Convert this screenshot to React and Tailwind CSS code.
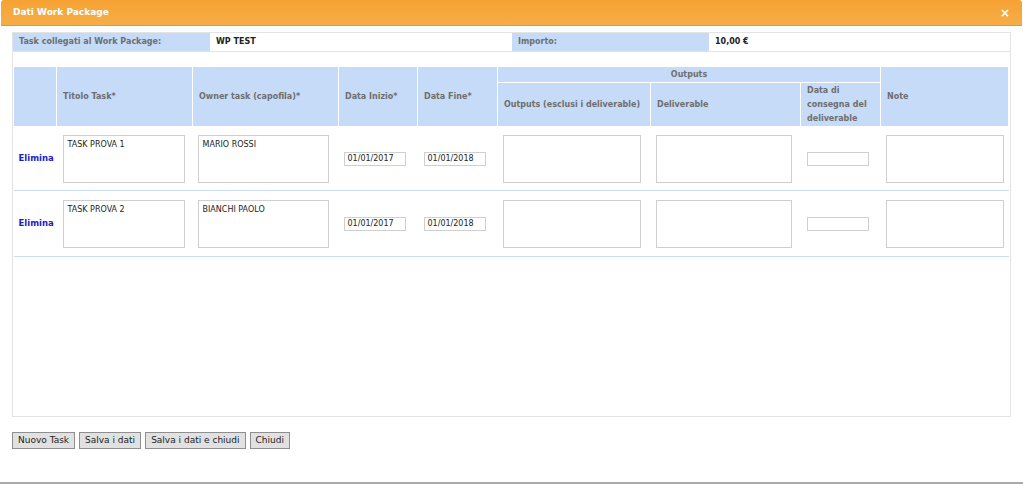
import React from "react";

const rows = [
  { titolo: "TASK PROVA 1", owner: "MARIO ROSSI", inizio: "01/01/2017", fine: "01/01/2018", h: "h-[64px]" },
  { titolo: "TASK PROVA 2", owner: "BIANCHI PAOLO", inizio: "01/01/2017", fine: "01/01/2018", h: "h-[66px]" },
];

function Area({ w, children }) {
  return (
    <div className={`${w} h-[48px] border border-[#cfcfcf] bg-white px-[4px] py-[4px] text-[8px] text-[#222] leading-[10px]`}>
      {children}
    </div>
  );
}

function Field({ w, value }) {
  return (
    <div className={`${w} h-[14px] border border-[#cfcfcf] bg-white px-[3px] text-[8px] leading-[12px] text-[#222]`}>
      {value}
    </div>
  );
}

export default function App() {
  const th = "bg-[#c6dbf8] border border-white align-middle px-[6px] text-[8px] font-bold text-[#6e6e6e]";
  return (
    <div className="w-[1023px] h-[484px] bg-white relative font-['DejaVu_Sans',sans-serif] border-b-2 border-[#a9a9a9]">
      {/* Title bar */}
      <div className="mx-[1px] h-[26px] rounded-t-[3px] bg-gradient-to-b from-[#f6a232] to-[#f5ae48] border-b border-[#e7962a] flex items-center justify-between px-[12px]">
        <span className="text-white text-[9px] font-bold">Dati Work Package</span>
        <span className="text-white text-[12px] font-bold leading-none">×</span>
      </div>

      <div className="px-[12px] pt-[6px]">
        {/* Outer box */}
        <div className="h-[385px] border border-[#e3e3e3]">
          <div className="flex h-[19px] border-b border-[#e3e3e3] text-[8px] font-bold items-stretch">
            <div className="w-[197px] bg-[#c6dbf8] text-[#6e6e6e] flex items-center pl-[6px]">Task collegati al Work Package:</div>
            <div className="w-[302px] flex items-center pl-[6px] text-[#222]">WP TEST</div>
            <div className="w-[197px] bg-[#c6dbf8] text-[#6e6e6e] flex items-center pl-[6px]">Importo:</div>
            <div className="flex-1 flex items-center pl-[6px] text-[#222]">10,00 €</div>
          </div>

          <table className="mt-[14px] w-[996px] border-collapse">
            <thead>
              <tr className="h-[16px]">
                <th rowSpan={2} className={`${th} text-left w-[43px]`}></th>
                <th rowSpan={2} className={`${th} text-left w-[136px]`}>Titolo Task*</th>
                <th rowSpan={2} className={`${th} text-left w-[146px]`}>Owner task (capofila)*</th>
                <th rowSpan={2} className={`${th} text-left w-[79px]`}>Data Inizio*</th>
                <th rowSpan={2} className={`${th} text-left w-[80px]`}>Data Fine*</th>
                <th colSpan={3} className={`${th} text-center`}>Outputs</th>
                <th rowSpan={2} className={`${th} text-left`}>Note</th>
              </tr>
              <tr className="h-[44px]">
                <th className={`${th} text-left w-[153px]`}>Outputs (esclusi i deliverable)</th>
                <th className={`${th} text-left w-[150px]`}>Deliverable</th>
                <th className={`${th} text-left w-[80px] leading-[14px]`}>Data di consegna del deliverable</th>
              </tr>
            </thead>
            <tbody>
              {rows.map((r, i) => (
                <tr key={i} className={`${r.h} border-b border-[#c9dcf3]`}>
                  <td className="pl-[5px] text-[8.5px] font-bold text-[#1c1cc4]">Elimina</td>
                  <td className="pl-[6px]"><Area w="w-[122px]">{r.titolo}</Area></td>
                  <td className="pl-[5px]"><Area w="w-[131px]">{r.owner}</Area></td>
                  <td className="pl-[5px]"><Field w="w-[62px]" value={r.inizio} /></td>
                  <td className="pl-[6px]"><Field w="w-[62px]" value={r.fine} /></td>
                  <td className="pl-[5px]"><Area w="w-[138px]" /></td>
                  <td className="pl-[5px]"><Area w="w-[136px]" /></td>
                  <td className="pl-[6px]"><Field w="w-[62px]" value="" /></td>
                  <td className="pl-[5px]"><Area w="w-[118px]" /></td>
                </tr>
              ))}
            </tbody>
          </table>
        </div>

        <div className="flex gap-[4px] mt-[15px]">
          {["Nuovo Task", "Salva i dati", "Salva i dati e chiudi", "Chiudi"].map((b) => (
            <button key={b} className="h-[17px] px-[5px] bg-[#e1e1e1] border border-[#8f8f8f] text-[9px] text-[#222] leading-[15px]">
              {b}
            </button>
          ))}
        </div>
      </div>
    </div>
  );
}
